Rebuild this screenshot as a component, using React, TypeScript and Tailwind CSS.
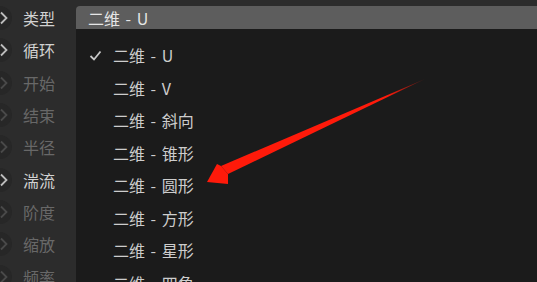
import React from "react";

const font = { fontFamily: '"Noto Sans CJK SC", "Noto Sans", sans-serif' };

const params = [
  { label: "类型", on: true },
  { label: "循环", on: true },
  { label: "开始", on: false },
  { label: "结束", on: false },
  { label: "半径", on: false },
  { label: "湍流", on: true },
  { label: "阶度", on: false },
  { label: "缩放", on: false },
  { label: "频率", on: false },
];

const options = ["U", "V", "斜向", "锥形", "圆形", "方形", "星形", "四角"];

function Chevron({ on }: { on: boolean }) {
  return (
    <div className="relative w-[20px] h-full flex items-center">
      <div className="absolute left-[-12px] w-[24px] h-[24px] rounded-full bg-[#272727]" />
      <svg width="10" height="14" viewBox="0 0 10 14" className="relative">
        <path
          d="M1 1.5 L6.5 7 L1 12.5"
          fill="none"
          stroke={on ? "#bdbdbd" : "#4a4a4a"}
          strokeWidth="1.8"
        />
      </svg>
    </div>
  );
}

export default function App() {
  return (
    <div
      className="relative flex w-[537px] h-[282px] overflow-hidden bg-[#2c2c2c] text-[16px] [word-spacing:2px]"
      style={font}
    >
      <div className="w-[76px] shrink-0 pt-[2px] flex flex-col">
        {params.map((p) => (
          <div key={p.label} className="h-[32.3px] shrink-0 flex items-center">
            <Chevron on={p.on} />
            <span className={`ml-[3px] ${p.on ? "text-[#d2d2d2]" : "text-[#686868]"}`}>
              {p.label}
            </span>
          </div>
        ))}
      </div>
      <div className="flex-1 flex flex-col pt-[6px]">
        <div className="h-[23px] bg-[#5d5d5d] rounded-tl-[4px] flex items-center pl-[12px] text-[#e6e6e6]">
          二维 - U
        </div>
        <div className="h-[2px] bg-[#343434]" />
        <div className="flex-1 bg-[#1b1b1b] pt-[10px] flex flex-col">
          {options.map((o, i) => (
            <div key={o} className="h-[32.5px] shrink-0 flex items-center text-[#cdcdcd]">
              <div className="w-[37px] flex justify-center pl-[2px]">
                {i === 0 && (
                  <svg width="13" height="11" viewBox="0 0 13 11">
                    <path d="M1.5 6 L5 9.5 L11.5 1.5" fill="none" stroke="#c8c8c8" strokeWidth="1.8" />
                  </svg>
                )}
              </div>
              <span>二维 - {o}</span>
            </div>
          ))}
        </div>
      </div>
      <svg className="absolute left-0 top-0" width="537" height="282" viewBox="0 0 537 282">
        <defs>
          <linearGradient id="tail" x1="425" y1="79" x2="300" y2="140" gradientUnits="userSpaceOnUse">
            <stop offset="0" stopColor="#ff1a0a" stopOpacity="0.2" />
            <stop offset="0.3" stopColor="#ff1a0a" />
            <stop offset="1" stopColor="#ff1a0a" />
          </linearGradient>
        </defs>
        <polygon points="425,79 228,174 221,166" fill="url(#tail)" />
        <polygon points="207,182 217,164 221,166 228,174 228,184" fill="#ff1a0a" />
      </svg>
    </div>
  );
}
